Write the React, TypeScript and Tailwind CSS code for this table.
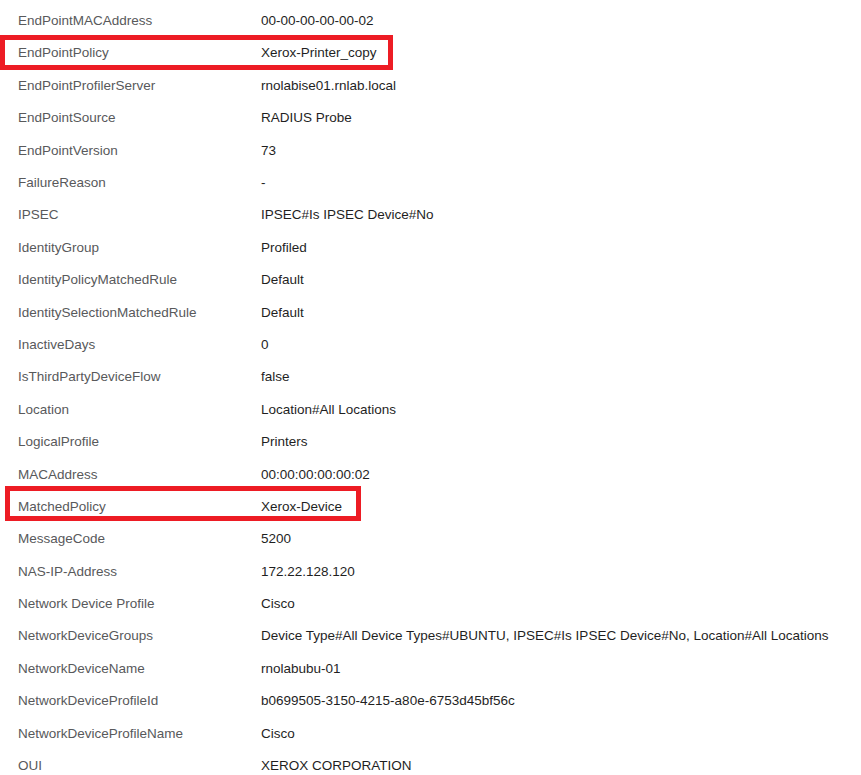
const rows: [string, string][] = [
  ['EndPointMACAddress', '00-00-00-00-00-02'],
  ['EndPointPolicy', 'Xerox-Printer_copy'],
  ['EndPointProfilerServer', 'rnolabise01.rnlab.local'],
  ['EndPointSource', 'RADIUS Probe'],
  ['EndPointVersion', '73'],
  ['FailureReason', '-'],
  ['IPSEC', 'IPSEC#Is IPSEC Device#No'],
  ['IdentityGroup', 'Profiled'],
  ['IdentityPolicyMatchedRule', 'Default'],
  ['IdentitySelectionMatchedRule', 'Default'],
  ['InactiveDays', '0'],
  ['IsThirdPartyDeviceFlow', 'false'],
  ['Location', 'Location#All Locations'],
  ['LogicalProfile', 'Printers'],
  ['MACAddress', '00:00:00:00:00:02'],
  ['MatchedPolicy', 'Xerox-Device'],
  ['MessageCode', '5200'],
  ['NAS-IP-Address', '172.22.128.120'],
  ['Network Device Profile', 'Cisco'],
  ['NetworkDeviceGroups', 'Device Type#All Device Types#UBUNTU, IPSEC#Is IPSEC Device#No, Location#All Locations'],
  ['NetworkDeviceName', 'rnolabubu-01'],
  ['NetworkDeviceProfileId', 'b0699505-3150-4215-a80e-6753d45bf56c'],
  ['NetworkDeviceProfileName', 'Cisco'],
  ['OUI', 'XEROX CORPORATION'],
]

export default function App() {
  return (
    <div
      className="w-[861px] h-[775px] overflow-hidden bg-white pt-[5px] text-[13.5px]"
      style={{ fontFamily: '"Liberation Sans", Arial, sans-serif' }}
    >
      {rows.map(([label, value]) => (
        <div key={label} className="relative flex items-center h-[32.4px]">
          <div className="w-[261px] shrink-0 pl-[18px] text-[#58595b]">{label}</div>
          <div className="text-[#1f1f1f] whitespace-nowrap">{value}</div>
          {label === 'EndPointPolicy' && (
            <div className="absolute left-0 top-[-2px] w-[393px] h-[35px] border-[5px] border-[#ed1c24]" />
          )}
          {label === 'MatchedPolicy' && (
            <div className="absolute left-[5px] top-[-5px] w-[356px] h-[35px] border-[5px] border-[#ed1c24]" />
          )}
        </div>
      ))}
    </div>
  )
}
